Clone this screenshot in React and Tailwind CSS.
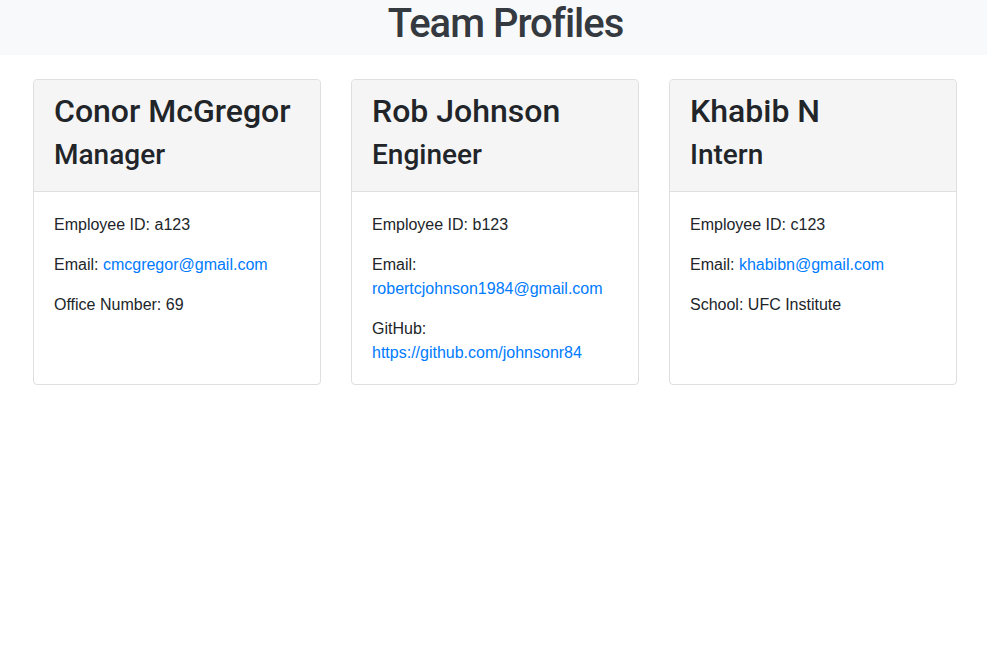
const team = [
    {
        name: "Conor McGregor",
        role: "Manager",
        id: "a123",
        email: "cmcgregor@gmail.com",
        extra: { label: "Office Number:", value: "69" },
    },
    {
        name: "Rob Johnson",
        role: "Engineer",
        id: "b123",
        email: "robertcjohnson1984@gmail.com",
        extra: { label: "GitHub:", value: "https://github.com/johnsonr84", link: true },
    },
    {
        name: "Khabib N",
        role: "Intern",
        id: "c123",
        email: "khabibn@gmail.com",
        extra: { label: "School:", value: "UFC Institute" },
    },
];

const headingFont = "font-['Roboto','Liberation_Sans',sans-serif]";

function ProfileCard({ member }) {
    return (
        <div className="flex flex-col rounded border border-[#dfdfdf] bg-white">
            <div className="bg-[#f5f5f5] border-b border-[#dfdfdf] px-5 pt-3 pb-[11px] rounded-t">
                <h2 className={`${headingFont} text-[32px] leading-[1.2] font-medium mb-2`}>{member.name}</h2>
                <h3 className={`${headingFont} text-[28px] leading-[1.2] font-medium mb-2`}>{member.role}</h3>
            </div>
            <div className="px-5 pt-[21px] pb-[19px] text-base leading-6">
                <p className="mb-4">Employee ID: {member.id}</p>
                <p className="mb-4">
                    Email: <a href={`mailto:${member.email}`} className="text-[#007bff]">{member.email}</a>
                </p>
                <p>
                    {member.extra.label}{" "}
                    {member.extra.link ? (
                        <a href={member.extra.value} className="text-[#007bff]">{member.extra.value}</a>
                    ) : (
                        member.extra.value
                    )}
                </p>
            </div>
        </div>
    );
}

export default function App() {
    return (
        <div className="min-h-screen bg-white text-[#212529] font-['Liberation_Sans',Arial,sans-serif]">
            <header className="bg-[#f8f9fa] h-[55px] pl-6">
                <h1 className={`${headingFont} text-center text-[40px] leading-[48px] font-medium tracking-[-1px] text-[#343a40]`}>
                    Team Profiles
                </h1>
            </header>
            <main className="grid grid-cols-3 gap-[30px] pl-[33px] pr-[30px] mt-6">
                {team.map((m) => (
                    <ProfileCard key={m.id} member={m} />
                ))}
            </main>
        </div>
    );
}
